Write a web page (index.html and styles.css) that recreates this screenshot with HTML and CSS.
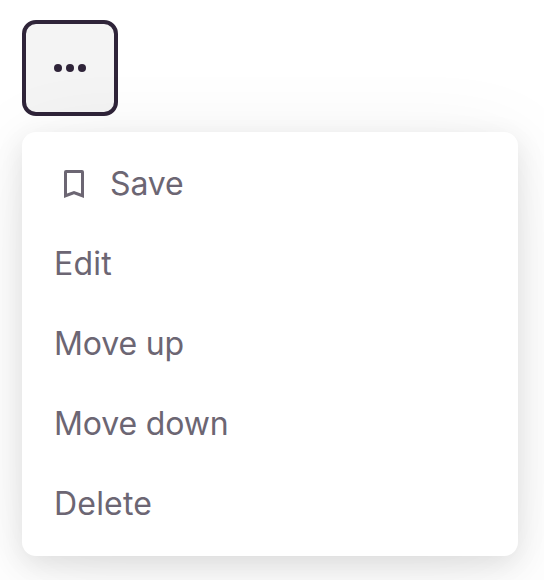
FILE: index.html
```html
<!DOCTYPE html>
<html lang="en">
<head>
<meta charset="utf-8">
<title>Menu</title>
<link rel="stylesheet" href="styles.css">
</head>
<body>
<button class="trigger" aria-label="More actions">
<svg width="32" height="8" viewBox="0 0 32 8" fill="currentColor"><circle cx="4" cy="4" r="4"/><circle cx="16" cy="4" r="4"/><circle cx="28" cy="4" r="4"/></svg>
</button>
<ul class="menu">
<li class="item"><svg class="icon" width="40" height="40" viewBox="0 0 40 40" fill="currentColor"><path fill-rule="evenodd" d="M12 6H28Q30 6 30 8V34L20 30.2L10 34V8Q10 6 12 6ZM13 9V29.6L20 26.9L27 29.6V9Z"/></svg><span class="tight">Save</span></li>
<li class="item loose">Edit</li>
<li class="item tight">Move up</li>
<li class="item tight">Move down</li>
<li class="item loose">Delete</li>
</ul>
</body>
</html>
```
FILE: styles.css
```css
* {
  box-sizing: border-box;
}

body {
  margin: 0;
  height: 580px;
  padding: 20px 26px 0 22px;
  overflow: hidden;
  background: #fff;
  color: #6c6673;
  font-family: Inter, sans-serif;
}

.trigger {
  display: flex;
  align-items: center;
  justify-content: center;
  width: 96px;
  height: 96px;
  padding: 0;
  border: 4px solid #2f2439;
  border-radius: 14px;
  background: #f4f4f4;
  color: #2f2439;
}

.menu {
  position: relative;
  height: 424px;
  margin: 16px 0 0;
  padding: 12px 0;
  border-radius: 14px;
  background: #fff;
  box-shadow: 0 8px 28px rgba(0, 0, 0, 0.1), 0 14px 90px rgba(0, 0, 0, 0.07);
  list-style: none;
}

.item {
  display: flex;
  align-items: center;
  height: 80px;
  padding: 0 32px;
  font-size: 32px;
  line-height: 40px;
}

.icon {
  margin-right: 16px;
}

.tight {
  letter-spacing: -0.15px;
}

.loose {
  letter-spacing: 0.2px;
}
```
